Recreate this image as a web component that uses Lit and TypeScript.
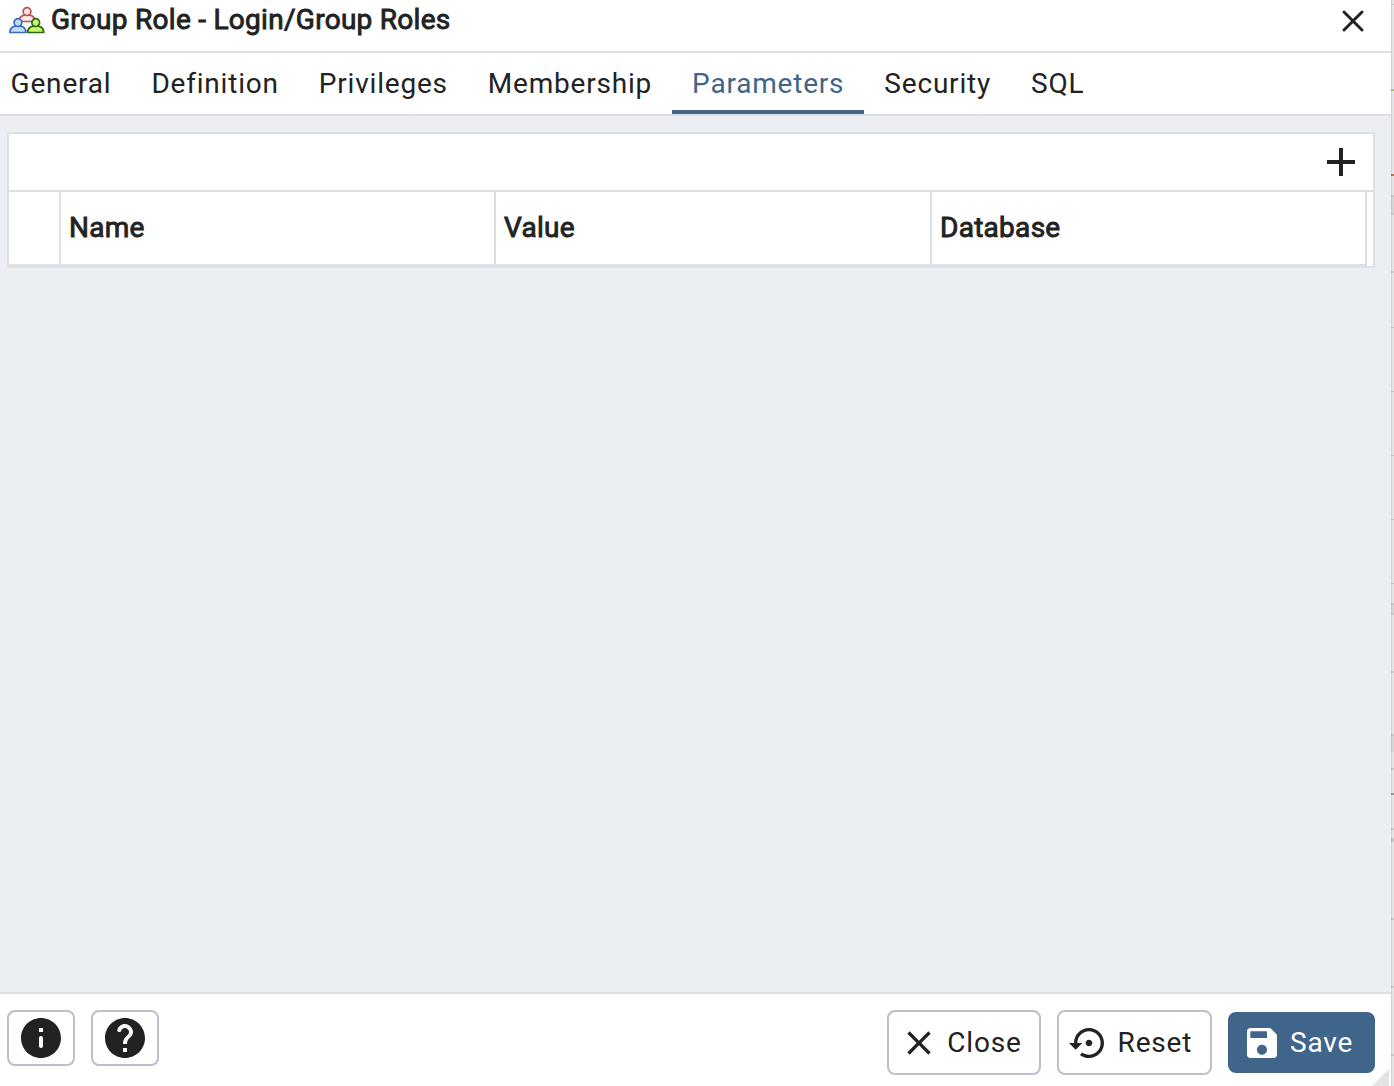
import { LitElement, html, css, svg } from "lit";
import { customElement, property, state } from "lit/decorators.js";

const ICONS: Record<string, string> = {
  close:
    "M19 6.41L17.59 5 12 10.59 6.41 5 5 6.41 10.59 12 5 17.59 6.41 19 12 13.41 17.59 19 19 17.59 13.41 12z",
  reset:
    "M14 12c0-1.1-.9-2-2-2s-2 .9-2 2 .9 2 2 2 2-.9 2-2zm-2-9c-4.97 0-9 4.03-9 9H0l4 4 4-4H5c0-3.87 3.13-7 7-7s7 3.13 7 7-3.13 7-7 7c-1.51 0-2.91-.49-4.06-1.3l-1.42 1.44C8.04 20.3 9.94 21 12 21c4.97 0 9-4.03 9-9s-4.03-9-9-9z",
  save:
    "M17 3H5c-1.11 0-2 .9-2 2v14c0 1.1.89 2 2 2h14c1.1 0 2-.9 2-2V7l-4-4zm-5 16c-1.66 0-3-1.34-3-3s1.34-3 3-3 3 1.34 3 3-1.34 3-3 3zm3-10H5V5h10v4z",
  add: "M19 13h-6v6h-2v-6H5v-2h6V5h2v6h6v2z",
  info:
    "M12 2C6.48 2 2 6.48 2 12s4.48 10 10 10 10-4.48 10-10S17.52 2 12 2zm0 15c-.55 0-1-.45-1-1v-4c0-.55.45-1 1-1s1 .45 1 1v4c0 .55-.45 1-1 1zm1-8h-2V7h2v2z",
  help:
    "M12 2C6.48 2 2 6.48 2 12s4.48 10 10 10 10-4.48 10-10S17.52 2 12 2zm1 17h-2v-2h2v2zm2.07-7.75l-.9.92c-.5.51-.86.97-1.04 1.69-.08.32-.13.68-.13 1.14h-2v-.5c0-.46.08-.9.22-1.31.2-.58.53-1.1.95-1.52l1.24-1.26c.46-.44.68-1.1.55-1.8-.13-.72-.69-1.33-1.39-1.53-1.11-.31-2.14.32-2.47 1.27-.12.37-.43.65-.82.65h-.3C8.4 9 8 8.44 8.16 7.88c.43-1.47 1.68-2.59 3.23-2.83 1.52-.24 2.97.55 3.87 1.8 1.18 1.63.83 3.38-.19 4.4z",
};

@customElement("ui-icon")
class UiIcon extends LitElement {
  @property() name = "close";
  @property({ type: Number }) size = 40;

  static styles = css`
    :host {
      display: block;
      flex: none;
    }
    .glyph {
      display: block;
      fill: currentColor;
    }
  `;

  render() {
    return html`<svg class="glyph" width=${this.size} height=${this.size} viewBox="0 0 24 24">
      <path d=${ICONS[this.name]}></path>
    </svg>`;
  }
}

// Slivers of the page that stays visible behind the dialog's right edge: [y, height, colour]
const BACKDROP: [number, number, string][] = [
  [4, 1, "#c8c8ca"],
  [89, 2, "#a5bd83"],
  [174, 2, "#c9704f"],
  [195, 20, "#d6d6d9"],
  [195, 2, "#c9cacc"],
  [213, 2, "#c9cacc"],
  [271, 2, "#c9cacc"],
  [327, 1, "#c5c8ca"],
  [391, 1, "#c5c8ca"],
  [455, 1, "#c5c8ca"],
  [519, 1, "#c5c8ca"],
  [583, 1, "#c5c8ca"],
  [603, 11, "#d6d6d9"],
  [603, 2, "#c9cacc"],
  [613, 2, "#c9cacc"],
  [671, 2, "#c9cacc"],
  [734, 18, "#d6d6d9"],
  [734, 2, "#c9cacc"],
  [768, 2, "#c9cacc"],
  [793, 2, "#98999a"],
  [828, 2, "#c9cacc"],
  [838, 4, "#c9cacc"],
  [918, 2, "#c9cacc"],
  [986, 2, "#c9cacc"],
  [1054, 2, "#c9cacc"],
];

@customElement("app-root")
class AppRoot extends LitElement {
  @state() private active = "Parameters";

  private tabs = ["General", "Definition", "Privileges", "Membership", "Parameters", "Security", "SQL"];
  private columns = ["Name", "Value", "Database"];

  static styles = css`
    :host {
      display: flex;
      width: 1394px;
      height: 1086px;
      overflow: hidden;
      background: #e4e3e5;
      color: #222;
      font-family: Roboto, "Liberation Sans", sans-serif;
      font-size: 28px;
      line-height: 32px;
    }
    * {
      box-sizing: border-box;
    }
    .dialog {
      position: relative;
      display: flex;
      flex-direction: column;
      width: 1391px;
      flex: none;
      background: #fff;
    }
    .strip {
      display: block;
      flex: none;
    }
    .strong {
      letter-spacing: 0.28px;
      -webkit-text-stroke: 0.9px currentColor;
    }
    .title {
      display: flex;
      align-items: flex-start;
      height: 53px;
      padding: 4px 25px 0 9px;
      border-bottom: 2px solid #dedfe5;
    }
    .roles {
      display: block;
      margin: 2px 6px 0 0;
    }
    .caption {
      flex: 1;
    }
    .dismiss {
      display: block;
      margin: 4px 0 0;
    }
    .tabs {
      display: flex;
      height: 63px;
      margin-left: -10px;
      border-bottom: 2px solid #dedfe5;
    }
    .tab {
      padding: 15px 19.4px 0 20.6px;
      letter-spacing: 0.8px;
      border-bottom: 4px solid transparent;
      white-space: nowrap;
    }
    .tab.active {
      color: #40658b;
      border-bottom-color: #40658b;
    }
    .body {
      flex: 1;
      padding: 16px 16px 0 7px;
      background: #ebeef3;
    }
    .grid {
      border: 2px solid #dedfe5;
      background: #fff;
    }
    .toolbar {
      display: flex;
      justify-content: flex-end;
      height: 58px;
      padding: 4px 8px 0;
      border-bottom: 2px solid #dedfe5;
    }
    .head {
      display: grid;
      grid-template-columns: 52px 435px 436px 435px;
      width: 1358px;
      height: 74px;
      border-bottom: 2px solid #dedfe5;
    }
    .cell {
      padding: 20px 8px 0;
      border-right: 2px solid #dedfe5;
    }
    .footer {
      display: flex;
      align-items: flex-start;
      gap: 16px;
      height: 94px;
      padding: 16px 16px 0 7px;
      border-top: 2px solid #dedfe5;
    }
    .square,
    .btn {
      display: flex;
      align-items: center;
      border: 2px solid #bbbfce;
      border-radius: 8px;
      background: #fff;
    }
    .square {
      justify-content: center;
      width: 68px;
      height: 56px;
    }
    .spacer {
      flex: 1;
    }
    .btn {
      height: 65px;
      gap: 8.3px;
      letter-spacing: 0.8px;
    }
    .btn.close {
      width: 154px;
      padding-left: 10px;
    }
    .btn.reset {
      width: 155px;
      padding-left: 10px;
      gap: 8.6px;
    }
    .btn.save {
      width: 147px;
      height: 61px;
      margin-top: 2px;
      padding-left: 12px;
      gap: 8px;
      border-color: #40658b;
      background: #40658b;
      color: #fff;
    }
    .resize {
      position: absolute;
      right: 2px;
      bottom: 0;
      width: 17px;
      height: 17px;
      background: #e4e4e4;
      clip-path: polygon(100% 0, 100% 100%, 0 100%);
    }
  `;

  private person(x: number, y: number, stroke: string, fill: string) {
    return svg`<g transform="translate(${x} ${y})" stroke=${stroke} fill=${fill} stroke-width="1.7">
      <path d="M0.9 14.7C1 10.5 3 8.7 6.5 8.3h4.8c3.5.4 5.5 2.2 5.6 6.4z"></path>
      <circle cx="8.9" cy="4.8" r="3.9"></circle>
    </g>`;
  }

  render() {
    return html`
      <div class="dialog">
        <div class="title">
          <svg class="roles" width="36" height="28" viewBox="0 0 36 28">
            ${this.person(9.1, 0.8, "#bd5050", "#fbe9e9")}
            ${this.person(0, 11.8, "#3b6cc0", "#c3dcf5")}
            ${this.person(17.8, 11.8, "#2c6b16", "#c8f36b")}
          </svg>
          <div class="caption strong">Group Role - Login/Group Roles</div>
          <svg class="dismiss" width="26" height="26" viewBox="0 0 26 26">
            <path d="M4 4L22 22M22 4L4 22" stroke="#222" stroke-width="3" stroke-linecap="round"></path>
          </svg>
        </div>
        <div class="tabs">
          ${this.tabs.map(
            (t) => html`<div class="tab ${t === this.active ? "active" : ""}" @click=${() => (this.active = t)}>${t}</div>`
          )}
        </div>
        <div class="body">
          <div class="grid">
            <div class="toolbar"><ui-icon name="add" size="48"></ui-icon></div>
            <div class="head">
              <div class="cell"></div>
              ${this.columns.map((c) => html`<div class="cell strong">${c}</div>`)}
            </div>
          </div>
        </div>
        <div class="footer">
          <div class="square"><ui-icon name="info" size="48"></ui-icon></div>
          <div class="square"><ui-icon name="help" size="48"></ui-icon></div>
          <div class="spacer"></div>
          <div class="btn close"><ui-icon name="close"></ui-icon>Close</div>
          <div class="btn reset"><ui-icon name="reset"></ui-icon>Reset</div>
          <div class="btn save"><ui-icon name="save"></ui-icon>Save</div>
        </div>
        <div class="resize"></div>
      </div>
      <svg class="strip" width="3" height="1086">
        ${BACKDROP.map(([y, h, c]) => svg`<rect x="0" y=${y} width="3" height=${h} fill=${c}></rect>`)}
        <rect x="0" y="0" width="1" height="1086" fill="#000" fill-opacity="0.08"></rect>
      </svg>
    `;
  }
}
